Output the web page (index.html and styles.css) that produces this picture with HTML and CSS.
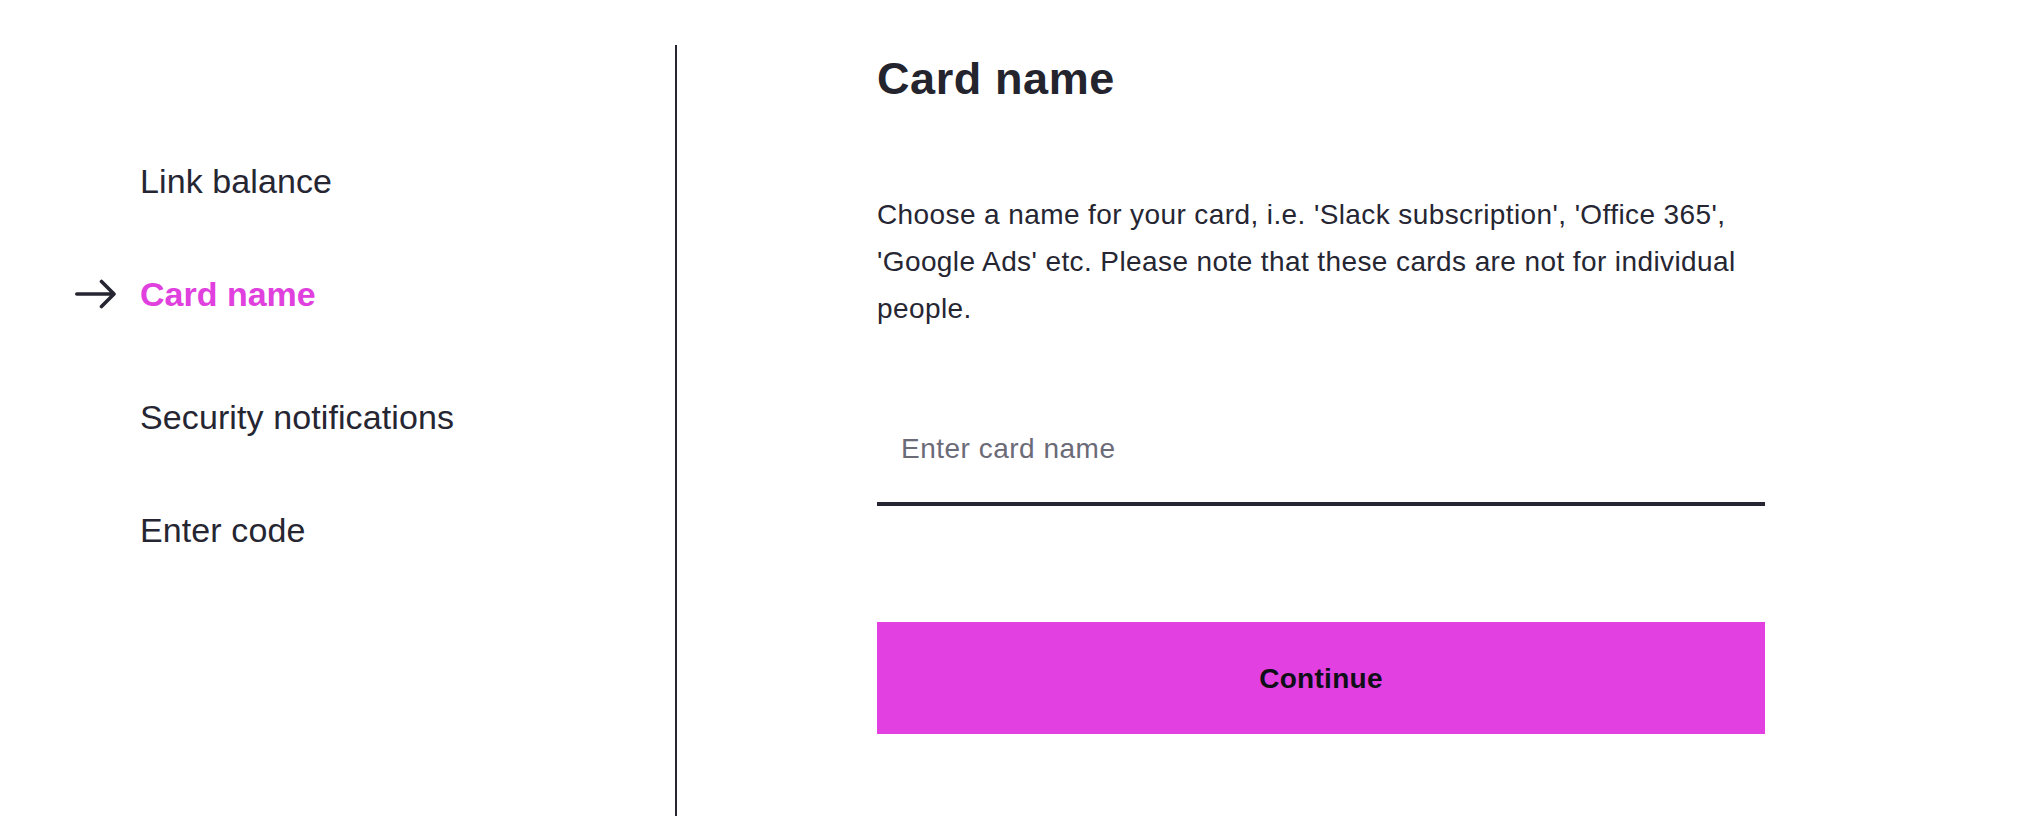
FILE: index.html
```html
<!DOCTYPE html>
<html lang="en">
<head>
<meta charset="utf-8">
<title>Card name</title>
<link rel="stylesheet" href="styles.css">
</head>
<body>
<div class="layout">
  <aside class="sidebar">
    <ul class="steps">
      <li class="step"><span class="step-icon"></span><span class="step-label">Link balance</span></li>
      <li class="step step-active">
        <span class="step-icon">
          <svg width="41" height="30" viewBox="0 0 41 30" aria-hidden="true">
            <path d="M1.8 15 H38.5 M26.5 2.5 L39 15 L26.5 27.5" fill="none" stroke="#262633" stroke-width="3.6" stroke-linecap="round" stroke-linejoin="round"/>
          </svg>
        </span>
        <span class="step-label">Card name</span>
      </li>
      <li class="step"><span class="step-icon"></span><span class="step-label">Security notifications</span></li>
      <li class="step"><span class="step-icon"></span><span class="step-label">Enter code</span></li>
    </ul>
  </aside>
  <main class="content">
    <h1 class="title">Card name</h1>
    <p class="intro">Choose a name for your card, i.e. 'Slack subscription', 'Office 365', 'Google Ads' etc. Please note that these cards are not for individual people.</p>
    <input class="name-input" type="text" placeholder="Enter card name">
    <button class="continue" type="button">Continue</button>
  </main>
</div>
</body>
</html>
```

FILE: styles.css
```css
* {
  box-sizing: border-box;
}

html, body {
  margin: 0;
  padding: 0;
  background: #ffffff;
}

body {
  font-family: "Liberation Sans", Arial, sans-serif;
  color: #262633;
}

.layout {
  display: flex;
  min-height: 100vh;
  padding-top: 45px;
}

.sidebar {
  width: 677px;
  flex: 0 0 677px;
  border-right: 2px solid #262633;
}

.steps {
  list-style: none;
  margin: 0;
  padding: 116px 0 0 75px;
}

.step {
  display: flex;
  align-items: center;
  gap: 24px;
  height: 40px;
  margin-bottom: 73px;
  font-size: 34px;
  line-height: 40px;
  letter-spacing: 0.1px;
  color: #262633;
}

.step-active {
  margin-bottom: 83px;
  font-weight: 700;
  letter-spacing: 0;
  color: #e040de;
}

.step-icon {
  display: flex;
  align-items: center;
  width: 41px;
  flex: 0 0 41px;
  height: 40px;
}

.step-icon svg {
  display: block;
}

.content {
  padding-left: 200px;
  width: 1088px;
}

.title {
  margin: 0;
  padding-top: 7px;
  font-size: 45px;
  line-height: 54px;
  font-weight: 700;
  letter-spacing: 0.6px;
  color: #24242f;
}

.intro {
  margin: 85px 0 0;
  width: 888px;
  font-size: 28px;
  line-height: 47px;
  letter-spacing: 0.4px;
  color: #262633;
}

.name-input {
  display: block;
  width: 888px;
  height: 114px;
  margin: 60px 0 0;
  padding: 4px 24px 0;
  border: 0;
  border-bottom: 4px solid #262633;
  border-radius: 0;
  outline: none;
  background: transparent;
  font-family: "Liberation Sans", Arial, sans-serif;
  font-size: 28px;
  letter-spacing: 0.5px;
  color: #262633;
}

.name-input::placeholder {
  color: #6b6b78;
  opacity: 1;
}

.continue {
  display: block;
  width: 888px;
  height: 112px;
  margin: 116px 0 0;
  padding: 2px 0 0;
  border: 0;
  border-radius: 0;
  background: #e240e1;
  font-family: "Liberation Sans", Arial, sans-serif;
  font-size: 28px;
  font-weight: 700;
  letter-spacing: 0.3px;
  color: #0f0f17;
  cursor: pointer;
}
```
